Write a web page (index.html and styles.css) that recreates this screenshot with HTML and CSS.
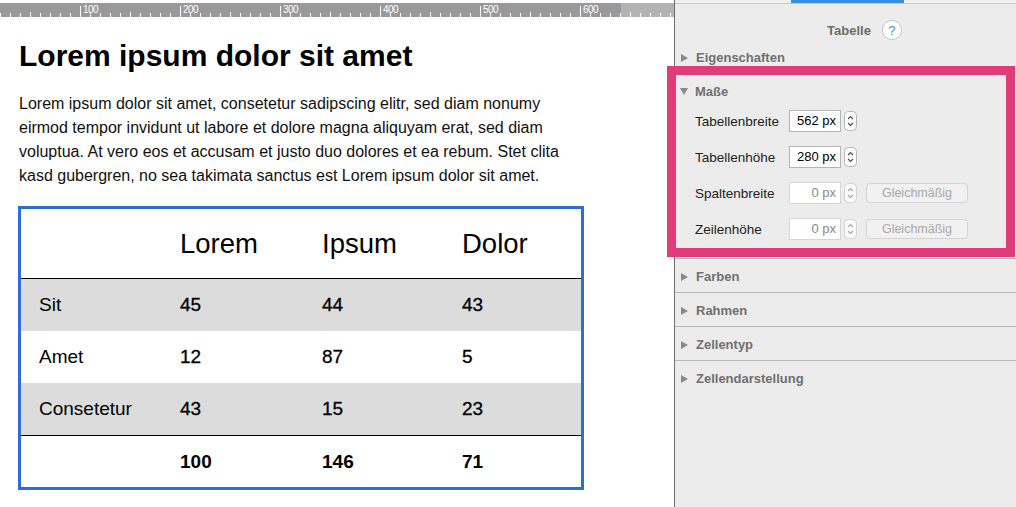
FILE: index.html
```html
<!DOCTYPE html>
<html lang="de">
<head>
<meta charset="utf-8">
<title>Tabelle</title>
<link rel="stylesheet" href="styles.css">
</head>
<body>
<div class="app">
  <main class="doc">
    <div class="ruler">
      <div class="ruler-marks">
        <span>100</span><span>200</span><span>300</span><span>400</span><span>500</span><span>600</span>
      </div>
    </div>
    <article class="content">
      <h1>Lorem ipsum dolor sit amet</h1>
      <p>Lorem ipsum dolor sit amet, consetetur sadipscing elitr, sed diam nonumy eirmod tempor invidunt ut labore et dolore magna aliquyam erat, sed diam voluptua. At vero eos et accusam et justo duo dolores et ea rebum. Stet clita kasd gubergren, no sea takimata sanctus est Lorem ipsum dolor sit amet.</p>
      <div class="tbl">
        <div class="tr head"><div></div><div>Lorem</div><div>Ipsum</div><div>Dolor</div></div>
        <div class="tr body shade"><div>Sit</div><div class="num">45</div><div class="num">44</div><div class="num">43</div></div>
        <div class="tr body"><div>Amet</div><div class="num">12</div><div class="num">87</div><div class="num">5</div></div>
        <div class="tr body shade"><div>Consetetur</div><div class="num">43</div><div class="num">15</div><div class="num">23</div></div>
        <div class="tr foot"><div></div><div>100</div><div>146</div><div>71</div></div>
      </div>
    </article>
  </main>
  <aside class="panel">
    <div class="tabs"><span class="tab-active"></span></div>
    <div class="title"><span>Tabelle</span><span class="help">?</span></div>
    <div class="section"><div class="sec-head"><span class="tri"></span>Eigenschaften</div></div>
    <div class="section open">
      <div class="sec-head"><span class="tri down"></span>Maße</div>
      <div class="fields">
        <div class="field">
          <span class="label">Tabellenbreite</span>
          <span class="input">562 px</span>
          <svg class="stepper" width="13" height="20" viewBox="0 0 13 20"><rect x="0.5" y="0.5" width="12" height="19" rx="4" fill="#fff" stroke="#b5b5b5"/><path d="M4 8 L6.5 5.5 L9 8 M4 12 L6.5 14.5 L9 12" fill="none" stroke="#4a4a4a" stroke-width="1.1"/></svg>
        </div>
        <div class="field">
          <span class="label">Tabellenhöhe</span>
          <span class="input">280 px</span>
          <svg class="stepper" width="13" height="20" viewBox="0 0 13 20"><rect x="0.5" y="0.5" width="12" height="19" rx="4" fill="#fff" stroke="#b5b5b5"/><path d="M4 8 L6.5 5.5 L9 8 M4 12 L6.5 14.5 L9 12" fill="none" stroke="#4a4a4a" stroke-width="1.1"/></svg>
        </div>
        <div class="field">
          <span class="label">Spaltenbreite</span>
          <span class="input off">0 px</span>
          <svg class="stepper" width="13" height="20" viewBox="0 0 13 20"><rect x="0.5" y="0.5" width="12" height="19" rx="4" fill="#fafafa" stroke="#d3d3d3"/><path d="M4 8 L6.5 5.5 L9 8 M4 12 L6.5 14.5 L9 12" fill="none" stroke="#a8a8a8" stroke-width="1.1"/></svg>
          <span class="btn">Gleichmäßig</span>
        </div>
        <div class="field">
          <span class="label">Zeilenhöhe</span>
          <span class="input off">0 px</span>
          <svg class="stepper" width="13" height="20" viewBox="0 0 13 20"><rect x="0.5" y="0.5" width="12" height="19" rx="4" fill="#fafafa" stroke="#d3d3d3"/><path d="M4 8 L6.5 5.5 L9 8 M4 12 L6.5 14.5 L9 12" fill="none" stroke="#a8a8a8" stroke-width="1.1"/></svg>
          <span class="btn">Gleichmäßig</span>
        </div>
      </div>
    </div>
    <div class="section"><div class="sec-head"><span class="tri"></span>Farben</div></div>
    <div class="section"><div class="sec-head"><span class="tri"></span>Rahmen</div></div>
    <div class="section"><div class="sec-head"><span class="tri"></span>Zellentyp</div></div>
    <div class="section last"><div class="sec-head"><span class="tri"></span>Zellendarstellung</div></div>
  </aside>
  <div class="highlight"></div>
</div>
</body>
</html>
```

FILE: styles.css
```css
* { box-sizing: border-box; }
html, body { margin: 0; padding: 0; }
body {
  font-family: "Liberation Sans", Arial, Helvetica, sans-serif;
  color: #000;
  background: #fff;
  width: 1016px;
  height: 507px;
  overflow: hidden;
}
.app {
  position: relative;
  display: flex;
  height: 507px;
}

/* ---------- document ---------- */
.doc {
  width: 675px;
  flex: none;
  border-right: 1px solid #6e6e6e;
  background: #fff;
}
.ruler {
  height: 14px;
  margin-top: 3px;
  overflow: hidden;
  background:
    linear-gradient(to right, #fff 1px, transparent 1px) 30px 100% / 100px 5px repeat-x,
    linear-gradient(to right, #fff 1px, transparent 1px) 0 100% / 10px 4px repeat-x,
    linear-gradient(to right, #9a989b 621px, #b3b2b4 621px);
}
.ruler-marks {
  display: flex;
  padding-left: 80px;
  padding-top: 3px;
}
.ruler-marks span {
  flex: none;
  width: 100px;
  height: 11px;
  border-left: 1px solid #fff;
  padding-left: 2px;
  color: #fff;
  font-size: 10px;
  line-height: 8px;
  letter-spacing: -0.5px;
}
.content {
  padding-left: 19px;
}
h1 {
  margin: 21px 0 0;
  font-size: 30px;
  line-height: 36px;
  font-weight: bold;
}
.content p {
  margin: 18px 0 0;
  width: 564px;
  font-size: 16px;
  line-height: 24px;
  color: #111;
}
.tbl {
  margin: 18px 0 0 -1px;
  width: 566px;
  border: 3px solid #2a6fd9;
}
.tr {
  display: grid;
  grid-template-columns: 141px 142px 140px 1fr;
  align-items: center;
}
.tr > div { padding-left: 18px; }
.head {
  height: 70px;
  border-bottom: 1px solid #000;
  font-size: 27.5px;
}
.body {
  height: 52px;
  font-size: 19px;
}
.body.shade { background: #dcdcdc; }
.num { -webkit-text-stroke: 0.3px #000; }
.foot {
  height: 52px;
  border-top: 1px solid #000;
  font-size: 19px;
  font-weight: bold;
}

/* ---------- panel ---------- */
.panel {
  flex: 1;
  background: #ececec;
  color: #222;
}
.tabs {
  height: 4px;
  border-bottom: 1px solid #c9c9c9;
  background: #f0f0f0;
  display: flex;
}
.tab-active {
  margin-left: 116px;
  width: 113px;
  height: 3px;
  background: #3a8ee2;
}
.title {
  height: 20px;
  margin-top: 16px;
  display: flex;
  justify-content: center;
  align-items: center;
  gap: 11px;
  padding-left: 38px;
  font-size: 13px;
  font-weight: bold;
  color: #6d6d6d;
}
.help {
  width: 20px;
  height: 20px;
  border-radius: 50%;
  background: #fff;
  border: 1px solid #c4c4c4;
  color: #3a8ee6;
  font-weight: normal;
  font-size: 13px;
  display: flex;
  align-items: center;
  justify-content: center;
}
.section {
  border-bottom: 1px solid #b7b7b7;
}
.section.last { border-bottom: none; }
.sec-head {
  height: 33px;
  display: flex;
  align-items: center;
  padding-left: 6px;
  padding-top: 2px;
  font-size: 13px;
  font-weight: bold;
  color: #707070;
}
.tri {
  width: 0;
  height: 0;
  border-left: 7px solid #8a8a8a;
  border-top: 4.5px solid transparent;
  border-bottom: 4.5px solid transparent;
  margin-right: 8px;
}
.tri.down {
  border-top: 7px solid #8a8a8a;
  border-left: 4.5px solid transparent;
  border-right: 4.5px solid transparent;
  border-bottom: none;
  margin-left: -1px;
  margin-right: 7px;
}
.fields {
  padding: 3px 0 18px 20px;
  display: flex;
  flex-direction: column;
  gap: 14px;
}
.field {
  height: 22px;
  display: flex;
  align-items: center;
  font-size: 13.5px;
}
.label {
  width: 94px;
  color: #222;
}
.input {
  width: 52px;
  height: 22px;
  background: #fff;
  border: 1px solid #b4b4b4;
  text-align: right;
  padding-right: 4px;
  line-height: 20px;
  font-size: 13px;
  color: #000;
}
.input.off {
  color: #8a8a8a;
  border-color: #d6d6d6;
}
.stepper {
  margin-left: 3px;
  flex: none;
}
.btn {
  margin-left: 9px;
  width: 102px;
  height: 20px;
  border: 1px solid #d4d4d4;
  border-radius: 4px;
  background: #f1f1f1;
  color: #a8a8a8;
  font-size: 12.5px;
  display: flex;
  align-items: center;
  justify-content: center;
}

/* ---------- annotation overlay ---------- */
.highlight {
  position: absolute;
  left: 667px;
  top: 66px;
  width: 348px;
  height: 191px;
  border: 9px solid #e23b7b;
  pointer-events: none;
}
```
